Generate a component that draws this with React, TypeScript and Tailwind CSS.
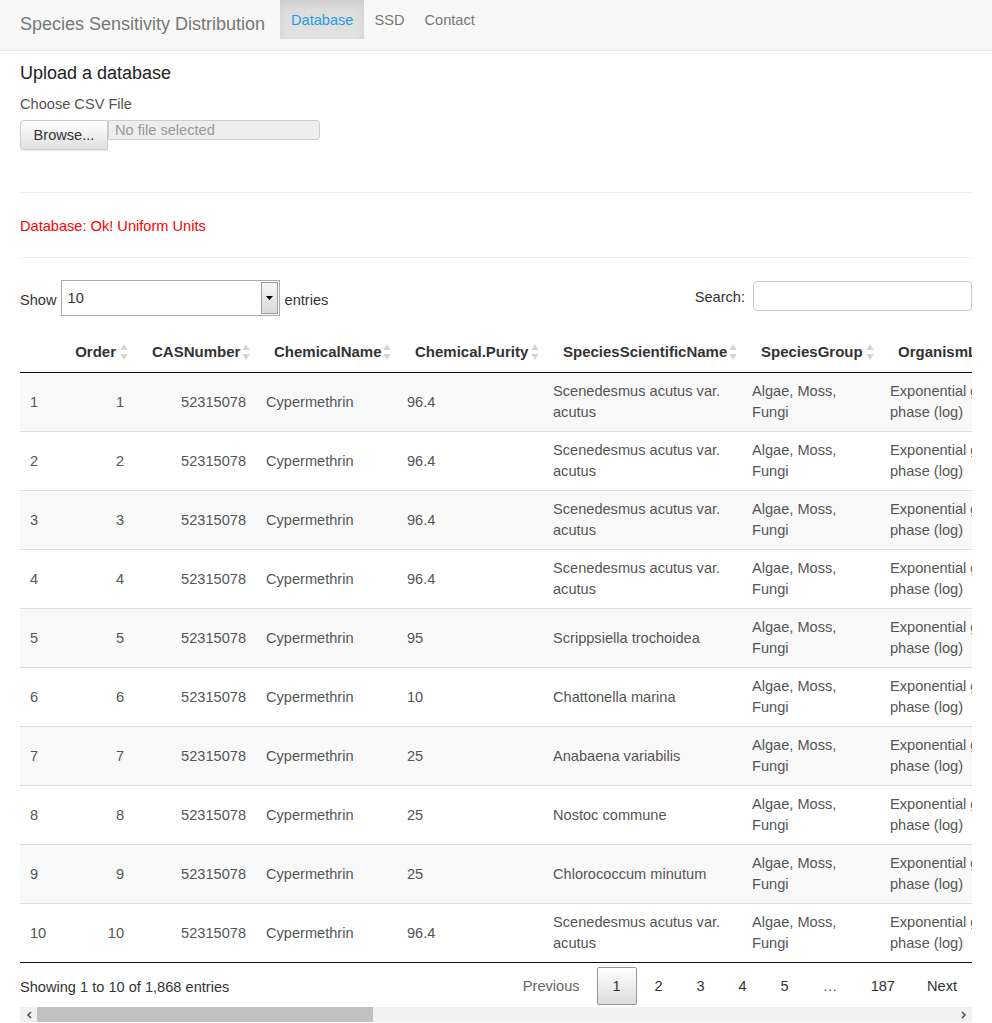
const rows = [
  { n: 1, species: 'Scenedesmus acutus var. acutus', purity: '96.4' },
  { n: 2, species: 'Scenedesmus acutus var. acutus', purity: '96.4' },
  { n: 3, species: 'Scenedesmus acutus var. acutus', purity: '96.4' },
  { n: 4, species: 'Scenedesmus acutus var. acutus', purity: '96.4' },
  { n: 5, species: 'Scrippsiella trochoidea', purity: '95' },
  { n: 6, species: 'Chattonella marina', purity: '10' },
  { n: 7, species: 'Anabaena variabilis', purity: '25' },
  { n: 8, species: 'Nostoc commune', purity: '25' },
  { n: 9, species: 'Chlorococcum minutum', purity: '25' },
  { n: 10, species: 'Scenedesmus acutus var. acutus', purity: '96.4' },
];

const columns = [
  { label: 'Order', w: 'w-[78px]', right: true },
  { label: 'CASNumber', w: 'w-[122px]', right: true },
  { label: 'ChemicalName', w: 'w-[141px]', right: false },
  { label: 'Chemical.Purity', w: 'w-[148px]', right: false },
  { label: 'SpeciesScientificName', w: 'w-[198px]', right: false },
  { label: 'SpeciesGroup', w: 'w-[137px]', right: false },
  { label: 'OrganismLifestage', w: 'w-[160px]', right: false },
  { label: 'Endpoint', w: 'w-[160px]', right: false },
];

function SortIcon() {
  return (
    <svg className="absolute right-[6px] top-1/2 -translate-y-1/2" width="8" height="20" viewBox="0 0 8 20">
      <path d="M4 2 L7.5 8 L0.5 8 Z" fill="#d4d4d4" />
      <path d="M4 18 L7.5 12 L0.5 12 Z" fill="#d4d4d4" />
    </svg>
  );
}

export default function App() {
  return (
    <div className="min-h-screen bg-white font-['Liberation_Sans',Arial,sans-serif] text-[14.6px] leading-[20px] text-[#333]">
      {/* Navbar */}
      <nav className="h-[51px] bg-[#f8f8f8] border-b border-[#e7e7e7] flex items-start pl-5">
        <div className="w-[260px] pt-[14px] text-[18px] leading-[20px] text-[#777]">Species Sensitivity Distribution</div>
        <ul className="flex">
          <li className="h-[39px] px-[11px] pt-[10px] text-[#1e9ee2] bg-[linear-gradient(#dbdbdb,#e2e2e2)] shadow-[inset_0_3px_9px_rgba(0,0,0,0.075)]">Database</li>
          <li className="h-[39px] px-[10px] pt-[10px] text-[#777]">SSD</li>
          <li className="h-[39px] px-[10px] pt-[10px] text-[#777]">Contact</li>
        </ul>
      </nav>

      <div className="px-5">
        {/* Upload */}
        <h3 className="mt-[12px] text-[18px] leading-[20px] text-[#222]">Upload a database</h3>
        <div className="mt-[11px] text-[#555]">Choose CSV File</div>
        <div className="mt-[6px] flex items-start">
          <div className="h-[30px] w-[88px] flex items-center justify-center border border-[#ccc] rounded-l-[4px] bg-[linear-gradient(#fff,#e0e0e0)] shadow-[0_1px_2px_rgba(0,0,0,0.1)]">Browse...</div>
          <div className="h-[20px] w-[212px] border border-[#ccc] rounded-r-[4px] bg-[#eee] pl-[6px] text-[#999] leading-[18px]">No file selected</div>
        </div>

        <hr className="mt-[42px] border-[#eee]" />
        <div className="mt-[23px] text-[#ff0000]">Database: Ok! Uniform Units</div>
        <hr className="mt-[21px] border-[#eee]" />

        {/* DataTable */}
        <div className="w-[952px] overflow-hidden">
          <div className="mt-[22px] flex items-start justify-between">
            <div className="flex items-center gap-[4px] h-[36px]">
              <span className="pt-[4px]">Show</span>
              <div className="relative h-[36px] w-[219px] border border-[#aaa] bg-white">
                <span className="absolute left-[6px] top-[7px]">10</span>
                <div className="absolute right-[1px] top-[1px] bottom-[1px] w-[17px] border border-[#999] bg-[linear-gradient(#f6f6f6,#dadada)] flex items-center justify-center">
                  <svg width="7" height="4" viewBox="0 0 7 4"><path d="M0 0 H7 L3.5 4 Z" fill="#000" /></svg>
                </div>
              </div>
              <span className="ml-[1px] pt-[4px]">entries</span>
            </div>
            <div className="flex items-center gap-[8px] pt-[1px]">
              <span className="pt-[2px]">Search:</span>
              <div className="h-[30px] w-[219px] border border-[#ccc] rounded-[4px] bg-white" />
            </div>
          </div>

          <table className="mt-[16px] table-fixed border-collapse w-[1180px]">
            <thead>
              <tr className="border-b border-[#111]">
                <th className="w-[36px]" />
                {columns.map((c) => (
                  <th key={c.label} className={`${c.w} relative py-[10px] px-[18px] text-[15px] font-bold text-[#333] whitespace-nowrap ${c.right ? 'text-right' : 'text-left'}`}>
                    {c.label}
                    <SortIcon />
                  </th>
                ))}
              </tr>
            </thead>
            <tbody className="text-[#555] leading-[21px]">
              {rows.map((r, i) => (
                <tr key={r.n} className={`${i % 2 === 0 ? 'bg-[#f9f9f9]' : 'bg-white'} ${i === rows.length - 1 ? 'border-b border-[#111]' : 'border-b border-[#ddd]'}`}>
                  <td className="h-[58px] py-[8px] px-[10px] align-middle">{r.n}</td>
                  <td className="py-[8px] px-[10px] text-right align-middle">{r.n}</td>
                  <td className="py-[8px] px-[10px] text-right align-middle">52315078</td>
                  <td className="py-[8px] px-[10px] align-middle">Cypermethrin</td>
                  <td className="py-[8px] px-[10px] align-middle">{r.purity}</td>
                  <td className="py-[8px] px-[8px] align-middle">{r.species}</td>
                  <td className="py-[8px] px-[9px] align-middle">Algae, Moss, Fungi</td>
                  <td className="py-[8px] px-[10px] align-middle">Exponential growth phase (log)</td>
                  <td className="py-[8px] px-[10px] align-middle">EC50</td>
                </tr>
              ))}
            </tbody>
          </table>

          <div className="flex items-start justify-between">
            <div className="pt-[14px]">Showing 1 to 10 of 1,868 entries</div>
            <div className="pt-[4px] flex items-center text-[#333]">
              <span className="px-[14px] py-[8px] border border-transparent text-[#666]">Previous</span>
              <span className="ml-[2px] w-[40px] py-[8px] text-center border border-[#979797] rounded-[2px] bg-[linear-gradient(#fff,#dcdcdc)]">1</span>
              <span className="ml-[2px] w-[40px] py-[8px] text-center border border-transparent">2</span>
              <span className="ml-[2px] w-[40px] py-[8px] text-center border border-transparent">3</span>
              <span className="ml-[2px] w-[40px] py-[8px] text-center border border-transparent">4</span>
              <span className="ml-[2px] w-[40px] py-[8px] text-center border border-transparent">5</span>
              <span className="ml-[2px] w-[47px] py-[8px] text-center text-[#555]">…</span>
              <span className="ml-[2px] px-[14px] py-[8px] border border-transparent">187</span>
              <span className="ml-[2px] px-[14px] py-[8px] border border-transparent">Next</span>
            </div>
          </div>

          {/* horizontal scrollbar */}
          <div className="mt-[2px] h-[15px] bg-[#f1f1f1] flex items-center">
            <div className="w-[17px] flex justify-center">
              <svg width="6" height="8" viewBox="0 0 6 8"><path d="M5 1 L2 4 L5 7" stroke="#505050" strokeWidth="1.6" fill="none" /></svg>
            </div>
            <div className="h-[15px] w-[336px] bg-[#c1c1c1]" />
            <div className="flex-1" />
            <div className="w-[17px] flex justify-center">
              <svg width="6" height="8" viewBox="0 0 6 8"><path d="M1 1 L4 4 L1 7" stroke="#505050" strokeWidth="1.6" fill="none" /></svg>
            </div>
          </div>
        </div>
      </div>
    </div>
  );
}
